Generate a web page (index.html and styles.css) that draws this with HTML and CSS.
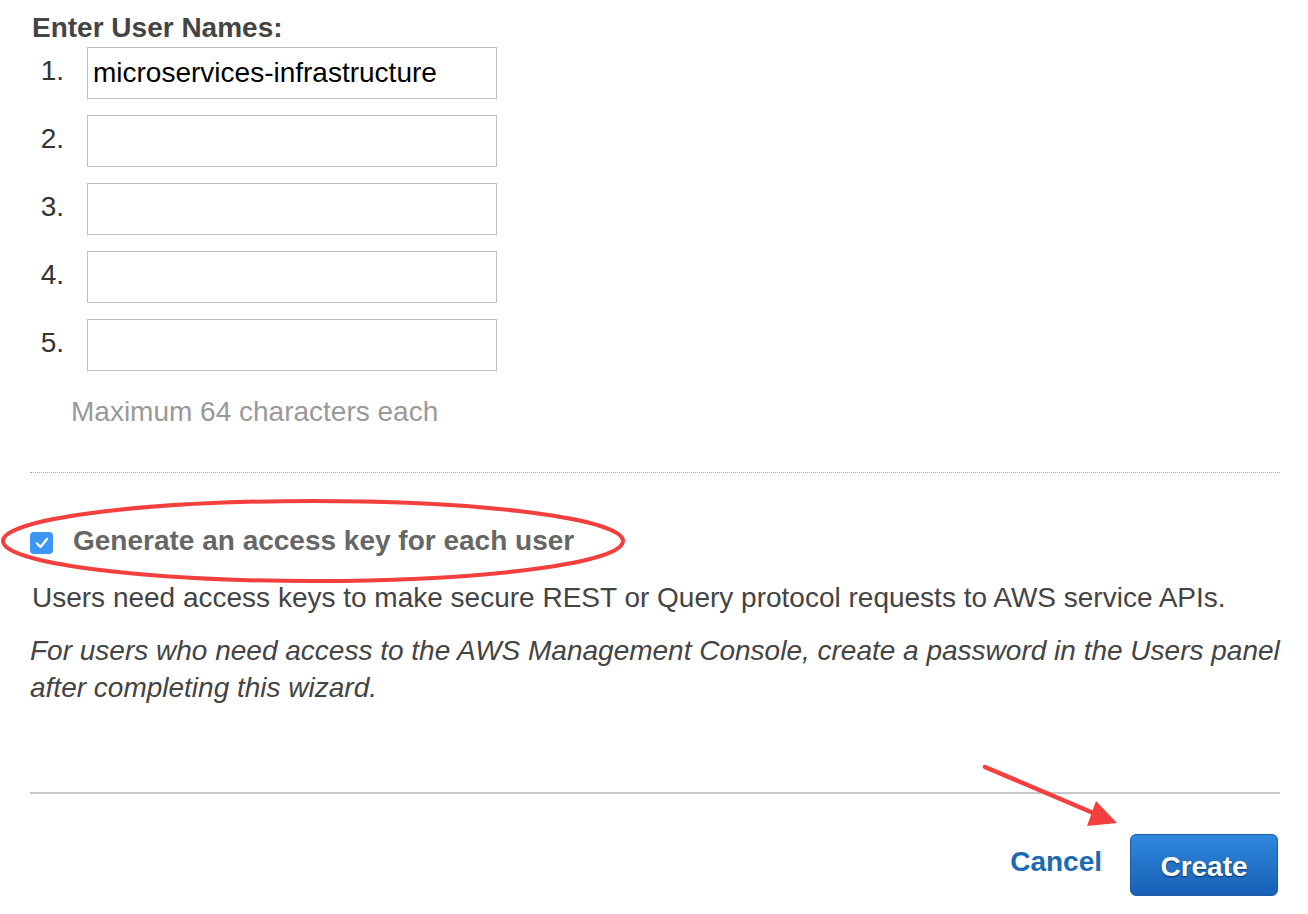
FILE: index.html
```html
<!DOCTYPE html>
<html lang="en">
<head>
<meta charset="utf-8">
<title>Create User</title>
<link rel="stylesheet" href="styles.css">
</head>
<body>
<div class="page">
  <h2 class="title">Enter User Names:</h2>
  <ol class="names">
    <li class="row"><span class="num">1.</span><input class="field" type="text" value="microservices-infrastructure"></li>
    <li class="row"><span class="num">2.</span><input class="field" type="text"></li>
    <li class="row"><span class="num">3.</span><input class="field" type="text"></li>
    <li class="row"><span class="num">4.</span><input class="field" type="text"></li>
    <li class="row"><span class="num">5.</span><input class="field" type="text"></li>
  </ol>
  <p class="hint">Maximum 64 characters each</p>
  <div class="dotted"></div>
  <label class="check">
    <span class="box"><svg width="16" height="14" viewBox="0 0 16 14"><path d="M3 7.5 L6.5 11 L13 3" fill="none" stroke="#fff" stroke-width="2.4" stroke-linecap="round" stroke-linejoin="round"/></svg></span>
    <span class="check-label">Generate an access key for each user</span>
  </label>
  <p class="desc">Users need access keys to make secure REST or Query protocol requests to AWS service APIs.</p>
  <p class="note">For users who need access to the AWS Management Console, create a password in the Users panel after completing this wizard.</p>
  <div class="solid"></div>
  <div class="actions">
    <a class="cancel" href="#">Cancel</a>
    <button class="create" type="button">Create</button>
  </div>
</div>
<svg class="annot" width="1308" height="914" viewBox="0 0 1308 914">
  <ellipse cx="313" cy="541" rx="310" ry="40" fill="none" stroke="#f43f3f" stroke-width="4"/>
  <line x1="985" y1="767" x2="1098" y2="815" stroke="#f43f3f" stroke-width="4.5" stroke-linecap="round"/>
  <polygon points="1117,823 1096,801 1087,826" fill="#f43f3f"/>
</svg>
</body>
</html>
```

FILE: styles.css
```css
html, body {
  margin: 0;
  padding: 0;
  background: #fff;
}
body {
  font-family: "Liberation Sans", Arial, Helvetica, sans-serif;
  font-size: 28px;
  color: #444;
  position: relative;
  width: 1308px;
  height: 914px;
  overflow: hidden;
}
.page {
  padding: 0 20px 0 30px;
}
.title {
  margin: 12px 0 3px 2px;
  font-size: 28px;
  line-height: 32px;
  font-weight: bold;
  color: #444;
}
.names {
  list-style: none;
  margin: 0;
  padding: 0;
  display: flex;
  flex-direction: column;
  gap: 16px;
}
.row {
  display: flex;
  align-items: center;
  height: 52px;
}
.num {
  width: 34px;
  text-align: right;
  line-height: 32px;
  color: #333;
  margin-right: 23px;
  margin-bottom: 4px;
}
.field {
  box-sizing: border-box;
  width: 410px;
  height: 52px;
  border: 1px solid #bdbdbd;
  border-radius: 0;
  padding: 0 5px;
  margin: 0;
  font-family: "Liberation Sans", Arial, Helvetica, sans-serif;
  font-size: 28px;
  color: #000;
  background: #fff;
  outline: none;
}
.hint {
  margin: 25px 0 0 41px;
  line-height: 32px;
  color: #999;
}
.dotted {
  margin: 44px 8px 0 0;
  border-top: 1px dotted #aaa;
}
.check {
  display: flex;
  align-items: center;
  height: 32px;
  margin-top: 52px;
}
.box {
  width: 23px;
  height: 22px;
  border-radius: 4px;
  background: #3d95f6;
  display: flex;
  align-items: center;
  justify-content: center;
  margin-right: 20px;
  margin-top: 4px;
}
.check-label {
  font-weight: bold;
  color: #666;
  line-height: 32px;
}
.desc {
  margin: 25px 0 0 2px;
  line-height: 32px;
  color: #444;
}
.note {
  margin: 18px 0 0 0;
  line-height: 37px;
  font-style: italic;
  color: #444;
}
.solid {
  margin: 86px 8px 0 0;
  border-top: 2px solid #c8c8c8;
}
.actions {
  display: flex;
  justify-content: flex-end;
  align-items: center;
  margin: 40px 10px 0 0;
  gap: 28px;
}
.cancel {
  font-weight: bold;
  color: #1b6ab4;
  text-decoration: none;
  line-height: 32px;
  margin-bottom: 6px;
}
.create {
  box-sizing: border-box;
  width: 148px;
  height: 62px;
  border: 1px solid #1c5aa6;
  border-radius: 6px;
  background: linear-gradient(#3088de, #1761b7);
  color: #fff;
  font-family: "Liberation Sans", Arial, Helvetica, sans-serif;
  font-size: 28px;
  font-weight: bold;
  text-shadow: 0 1px 2px rgba(0, 0, 0, 0.6);
  padding: 0;
  padding-top: 3px;
}
.annot {
  position: absolute;
  left: 0;
  top: 0;
  pointer-events: none;
}
```
